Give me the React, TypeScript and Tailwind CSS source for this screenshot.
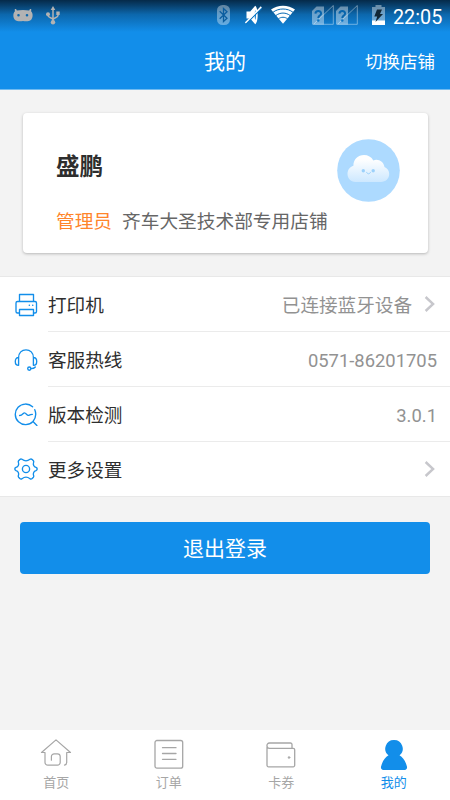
import type { ReactNode } from "react";

const stroke = {
  fill: "none",
  stroke: "currentColor",
  strokeLinecap: "round",
  strokeLinejoin: "round",
} as const;

function AndroidIcon() {
  return (
    <svg className="h-[14px] w-[22px]" viewBox="0 0 22 14">
      <path
        fill="#b3b3b3"
        fillRule="evenodd"
        d="M2.800 1h1.200l.9 1.400C8.500 1.700 13.500 1.700 17.100 2.400l.9-1.400h1.200V3.600C21.200 5.200 21 10 19.200 11.700c-1.900 1.800-5.500 2-8.200 1.300-2.700.7-6.300.5-8.200-1.300C1 10 .8 5.200 2.800 3.600zM6.500 6a1.300 1.300 0 1 0 0 2.600A1.300 1.300 0 0 0 6.500 6zm8.500 0a1.300 1.300 0 1 0 0 2.600A1.300 1.300 0 0 0 15 6z"
      />
    </svg>
  );
}

function UsbIcon() {
  return (
    <svg className="h-[20px] w-[16px]" viewBox="0 0 16 20" fill="#b3b3b3">
      <path d="M8 0l2.300 4H5.700zM11.300 5.500h3.400V9h-3.400z" />
      <circle cx="3" cy="8.200" r="2" />
      <circle cx="8" cy="16.200" r="2.200" />
      <path d="M8 3v13M3 8v1.500c0 2.500 5 2 5 4.500M13 8v1.500c0 2.500-5 2-5 4.500" fill="none" stroke="#b3b3b3" strokeWidth="1.500" />
    </svg>
  );
}

function BluetoothIcon() {
  return (
    <svg className="h-[20px] w-[13px]" viewBox="0 0 13 20">
      <rect width="13" height="20" rx="5.500" fill="#fff" fillOpacity=".36" />
      <path d="M2.700 6.300l7.300 7L6.500 16.500v-13L10 6.700l-7.300 7" fill="none" stroke="#0a5d9f" strokeWidth="1.300" />
    </svg>
  );
}

function MutedIcon() {
  return (
    <svg className="h-[20px] w-[17px]" viewBox="0 0 17 20">
      <path fill="#fff" d="M1.500 6.500h3.700L10.200.8c3 1.600 3.600 16 0 18.400L5.200 13.500H1.500z" />
      <path d="M10.300 5c.8 2 .8 8 0 10-.8-2-.8-8 0-10z" fill="#087bd0" />
      <path d="M.8 19L17 2.800" stroke="#0873c2" strokeWidth="1.300" />
      <path d="M.3 17.900L16.300 1.900" stroke="#fff" strokeWidth="1.500" />
    </svg>
  );
}

function WifiIcon() {
  return (
    <svg className="h-[19px] w-[24px]" viewBox="0 0 24 19" fill="none">
      <path d="M0 4.500C6.500-.6 17.500-.6 24 4.500L12 18.800z" fill="#fff" />
      <path d="M2 7.300c5.500-4.400 14.500-4.400 20 0M4.700 10.700c4.200-3.500 10.400-3.500 14.600 0M7.400 13.900c2.700-2.200 6.500-2.200 9.200 0" stroke="#086ab3" strokeWidth="1" />
    </svg>
  );
}

function SimIcon() {
  return (
    <svg className="h-[20px] w-[22px]" viewBox="0 0 22 20">
      <path d="M0 6l4.500-4.500H12V9L12 19.500H0z" fill="#fff" fillOpacity=".4" />
      <path d="M1.500 19.300L21.300.5v18.800z" fill="none" stroke="#fff" strokeOpacity=".4" strokeWidth="1" />
      <path d="M3.400 8.600c.2-3.400 5.700-3.400 5.700-.2 0 2.200-2.800 2.100-2.800 4.500" fill="none" stroke="#0865ac" strokeWidth="2" />
      <circle cx="6.300" cy="15.500" r="1.200" fill="#0873c2" />
    </svg>
  );
}

function BatteryIcon() {
  return (
    <svg className="h-[20px] w-[13px]" viewBox="0 0 13 20">
      <path d="M3.500 0h6v2H13v14H0V2h3.500z" fill="#fff" fillOpacity=".4" />
      <path d="M0 15.500h13V20H0z" fill="#fff" />
      <path d="M5 4.500h5L8 9h3l-7.500 8 1.700-5.500H2.300z" fill="#122735" />
    </svg>
  );
}

function StatusBar() {
  return (
    <div className="flex h-8 items-start bg-linear-to-b from-[#052a49] via-[#0c67ac] via-45% to-[#128eea] pr-[8px] pl-[12px]">
      <div className="mt-[8px]"><AndroidIcon /></div>
      <div className="mt-[6px] ml-[11px]"><UsbIcon /></div>
      <div className="mt-[5px] ml-auto flex">
        <BluetoothIcon />
        <div className="ml-[15px]"><MutedIcon /></div>
        <div className="ml-[9px]"><WifiIcon /></div>
        <div className="ml-[17px]"><SimIcon /></div>
        <div className="ml-[2px]"><SimIcon /></div>
        <div className="ml-[14px]"><BatteryIcon /></div>
      </div>
      <span className="mt-[6px] ml-[8px] w-[49px] text-[19.800px] leading-[23px] whitespace-nowrap text-white">22:05</span>
    </div>
  );
}

function CloudAvatar() {
  return (
    <svg className="h-[63px] w-[63px]" viewBox="0 0 63 63">
      <defs>
        <linearGradient id="cloud" x1="0" y1="0" x2="0" y2="1">
          <stop offset="0.150" stopColor="#fff" />
          <stop offset="1" stopColor="#cde8ff" />
        </linearGradient>
      </defs>
      <circle cx="31.500" cy="31.500" r="31.300" fill="#addaff" />
      <path
        fill="url(#cloud)"
        d="M18.500 43C13.500 43 10.500 39 10.500 35c0-4.200 2.400-7.200 5.900-8.300C16.200 20.500 21 16 27 16c4 0 7.500 2 9.300 5.400 4.900-2 10.400 1 11.200 6.700 3 1.200 4.700 3.800 4.700 7 0 4.700-3.700 7.900-8.200 7.900z"
      />
      <circle cx="26.300" cy="31.700" r="1.700" fill="#9cd1fb" />
      <circle cx="36.200" cy="31.700" r="1.700" fill="#9cd1fb" />
      <path d="M29.600 33.300c.7 2.100 3.200 2.100 3.900 0" fill="none" stroke="#9cd1fb" strokeWidth="1" strokeLinecap="round" />
    </svg>
  );
}

function PrinterIcon() {
  return (
    <svg className="h-6 w-6" viewBox="0 0 24 24" {...stroke} strokeWidth="1.350">
      <path d="M5.500 8.500V1.500h14v7M5 20H3.500A1.500 1.500 0 0 1 2 18.500V10a1.500 1.500 0 0 1 1.500-1.500h17.500a1.500 1.500 0 0 1 1.500 1.500v8.500a1.500 1.500 0 0 1-1.500 1.500H19.500" />
      <path d="M5.500 16.500h14v6h-14z" />
      <path d="M15.300 12.300h.1M18.700 12.300h.1" strokeWidth="1.500" />
    </svg>
  );
}

function HeadsetIcon() {
  return (
    <svg className="h-6 w-6" viewBox="0 0 24 24" {...stroke} strokeWidth="1.350">
      <path d="M4.600 9.500C4.600 4.800 7.800 1.800 12 1.800s7.400 3 7.400 7.700M4.600 9.500C.2 9.500.2 17.300 4.600 17.300zM19.400 9.500c4.400 0 4.400 7.800 0 7.800z" />
      <circle cx="15.300" cy="20.600" r="1.600" />
      <path d="M17 20.600c2 0 3.300-.3 4.300-1.600" />
    </svg>
  );
}

function VersionIcon() {
  return (
    <svg className="h-6 w-6" viewBox="0 0 24 24" {...stroke} strokeWidth="1.350">
      <path d="M18.600 3.800A10.300 10.300 0 1 0 19 18.500l3.900 3.900M20.800 6.700c1.600 4 1.100 8.200-1.800 11.800" />
      <path d="M5.600 12.500c3 0 3.500-2.700 4.900-2.700S13 12.400 14.200 12.400s1.200-1 4.100-1" />
    </svg>
  );
}

function GearIcon() {
  return (
    <svg className="h-6 w-6" viewBox="0 0 24 24" {...stroke} strokeWidth="1.350">
      <path d="M5.800 2.500Q6.900 1.500 8 2.300C10.300 4.100 13.700 4.100 16 2.300q1.100-.8 2.200.2L19.400 3.700q.6.700.2 1.700c-.8 2.300.2 4.300 2.400 5 .8.300 1.200.8 1.200 1.600s-.4 1.300-1.200 1.600c-2.200.7-3.200 2.700-2.400 5q.4 1-.2 1.700L18.200 21.500q-1.100 1-2.200.2c-2.300-1.800-5.700-1.800-8 0q-1.100.8-2.200-.2L4.600 20.300q-.6-.7-.2-1.700c.8-2.300-.2-4.300-2.400-5C1.200 13.300.8 12.800.8 12s.4-1.300 1.200-1.600c2.200-.7 3.200-2.700 2.400-5q-.4-1 .2-1.700z" />
      <circle cx="12" cy="12" r="3.600" />
    </svg>
  );
}

function Chevron() {
  return (
    <svg className="ml-[12px] h-4 w-[12px]" viewBox="0 0 12 16" fill="none" stroke="#c7c7cc" strokeWidth="2.400">
      <path d="M1.600 1l7.500 7-7.500 7" />
    </svg>
  );
}

function Row({ icon, label, value, arrow, last }: { icon: ReactNode; label: string; value?: string; arrow?: boolean; last?: boolean }) {
  return (
    <div className={`flex items-center bg-white pl-[14px] ${last ? "h-[54px]" : "h-[55px]"}`}>
      <span className="text-[#128eea]">{icon}</span>
      <div className={`ml-[10px] flex h-full flex-1 items-center text-[18.600px] ${arrow ? "pr-[14px]" : "pr-[13px]"} ${last ? "" : "border-b border-[#ebebeb]"}`}>
        <span className="pt-[6px] text-[#2e2e2e]">{label}</span>
        <span className={`ml-auto text-[#929292] ${arrow ? "pt-[6px]" : "pt-[3px] text-[18.400px]"}`}>{value}</span>
        {arrow && <Chevron />}
      </div>
    </div>
  );
}

function HomeIcon() {
  return (
    <svg className="h-8 w-8" viewBox="0 0 32 32" {...stroke} strokeWidth="1.200">
      <path d="M24.500 27.200c1.500-.4 2.200-1.300 2.200-3V14.500h3.800L16 1.900 1.500 14.500H5v9.900a2.800 2.800 0 0 0 2.800 2.800h9.600a2.800 2.800 0 0 0 2.800-2.800v-5.800a2.800 2.800 0 0 0-2.800-2.800H14.200a2.800 2.800 0 0 0-2.800 2.800v3.600" />
    </svg>
  );
}

function OrdersIcon() {
  return (
    <svg className="h-8 w-8" viewBox="0 0 32 32" {...stroke} strokeWidth="1.300">
      <rect x="2" y="2.500" width="27.700" height="27.700" rx="2" />
      <path d="M9.500 9.700h13.500M9.500 15.500h13.500M9.500 21.300h13.500" />
    </svg>
  );
}

function WalletIcon() {
  return (
    <svg className="h-8 w-8" viewBox="0 0 32 32" {...stroke} strokeWidth="1.300">
      <path d="M27 10V6.500A1.500 1.500 0 0 0 25.500 5H4.500c-3.500 0-3.300 5.300 0 5.300h23.700a1.500 1.500 0 0 1 1.500 1.500v15.500a1.500 1.500 0 0 1-1.500 1.500h-24.700A1.500 1.500 0 0 1 2 27.300V7.500" />
      <circle cx="24" cy="19.500" r="1" fill="currentColor" strokeWidth=".5" />
    </svg>
  );
}

function PersonIcon() {
  return (
    <svg className="h-8 w-8" viewBox="0 0 32 32" fill="currentColor">
      <path d="M16 2a8.600 8.600 0 0 1 5.500 15.300c3.400 2 6.100 5.900 7.500 11.400.3 1.600-.5 3.200-1.900 3.200H4.900c-1.400 0-2.200-1.600-1.900-3.200 1.400-5.500 4.100-9.400 7.500-11.400A8.600 8.600 0 0 1 16 2z" />
    </svg>
  );
}

function Tab({ icon, label, active }: { icon: ReactNode; label: string; active?: boolean }) {
  return (
    <div className={`flex flex-1 flex-col items-center pt-[8px] ${active ? "text-[#128eea]" : "text-[#a6a6a6]"}`}>
      {icon}
      <span className="mt-[3px] text-[13px] leading-[20px]">{label}</span>
    </div>
  );
}

export default function App() {
  return (
    <div className="flex h-[800px] w-[450px] flex-col overflow-hidden bg-[#f3f3f3] font-['Roboto','Noto_Sans_CJK_SC',sans-serif]">
      <header className="h-[90px] shrink-0 border-b border-[#70bbf1] bg-[#128eea]">
        <StatusBar />
        <div className="grid h-[57px] grid-cols-3 items-center pt-[4px] text-white">
          <span />
          <h1 className="text-center text-[21px]">我的</h1>
          <span className="pr-[15px] text-right text-[17.500px]">切换店铺</span>
        </div>
      </header>
      <section className="mx-[22.500px] mt-[23px] flex h-[140px] shrink-0 justify-between rounded-[4px] bg-white pr-[28px] pl-[33.500px] shadow-[0_1px_3px_rgba(0,0,0,0.25)]">
        <div className="pt-[36px]">
          <h2 className="text-[23.500px] leading-[36px] font-bold text-[#2e2e2e]">盛鹏</h2>
          <p className="mt-[23px] flex gap-[10px] text-[18.700px] leading-[28px] text-[#666]">
            <span className="text-[#ff852b]">管理员</span>
            <span>齐车大圣技术部专用店铺</span>
          </p>
        </div>
        <div className="-ml-[40px] pt-[26px]"><CloudAvatar /></div>
      </section>
      <section className="mt-[23px] shrink-0 border-y border-[#e8e8e8]">
        <Row icon={<PrinterIcon />} label="打印机" value="已连接蓝牙设备" arrow />
        <Row icon={<HeadsetIcon />} label="客服热线" value="0571-86201705" />
        <Row icon={<VersionIcon />} label="版本检测" value="3.0.1" />
        <Row icon={<GearIcon />} label="更多设置" arrow last />
      </section>
      <button className="mx-[20px] mt-[25px] h-[52px] shrink-0 rounded-[4px] bg-[#128eea] pt-[4px] text-[21px] text-white">退出登录</button>
      <nav className="mt-auto flex h-[70px] shrink-0 bg-white">
        <Tab icon={<HomeIcon />} label="首页" />
        <Tab icon={<OrdersIcon />} label="订单" />
        <Tab icon={<WalletIcon />} label="卡券" />
        <Tab icon={<PersonIcon />} label="我的" active />
      </nav>
    </div>
  );
}
